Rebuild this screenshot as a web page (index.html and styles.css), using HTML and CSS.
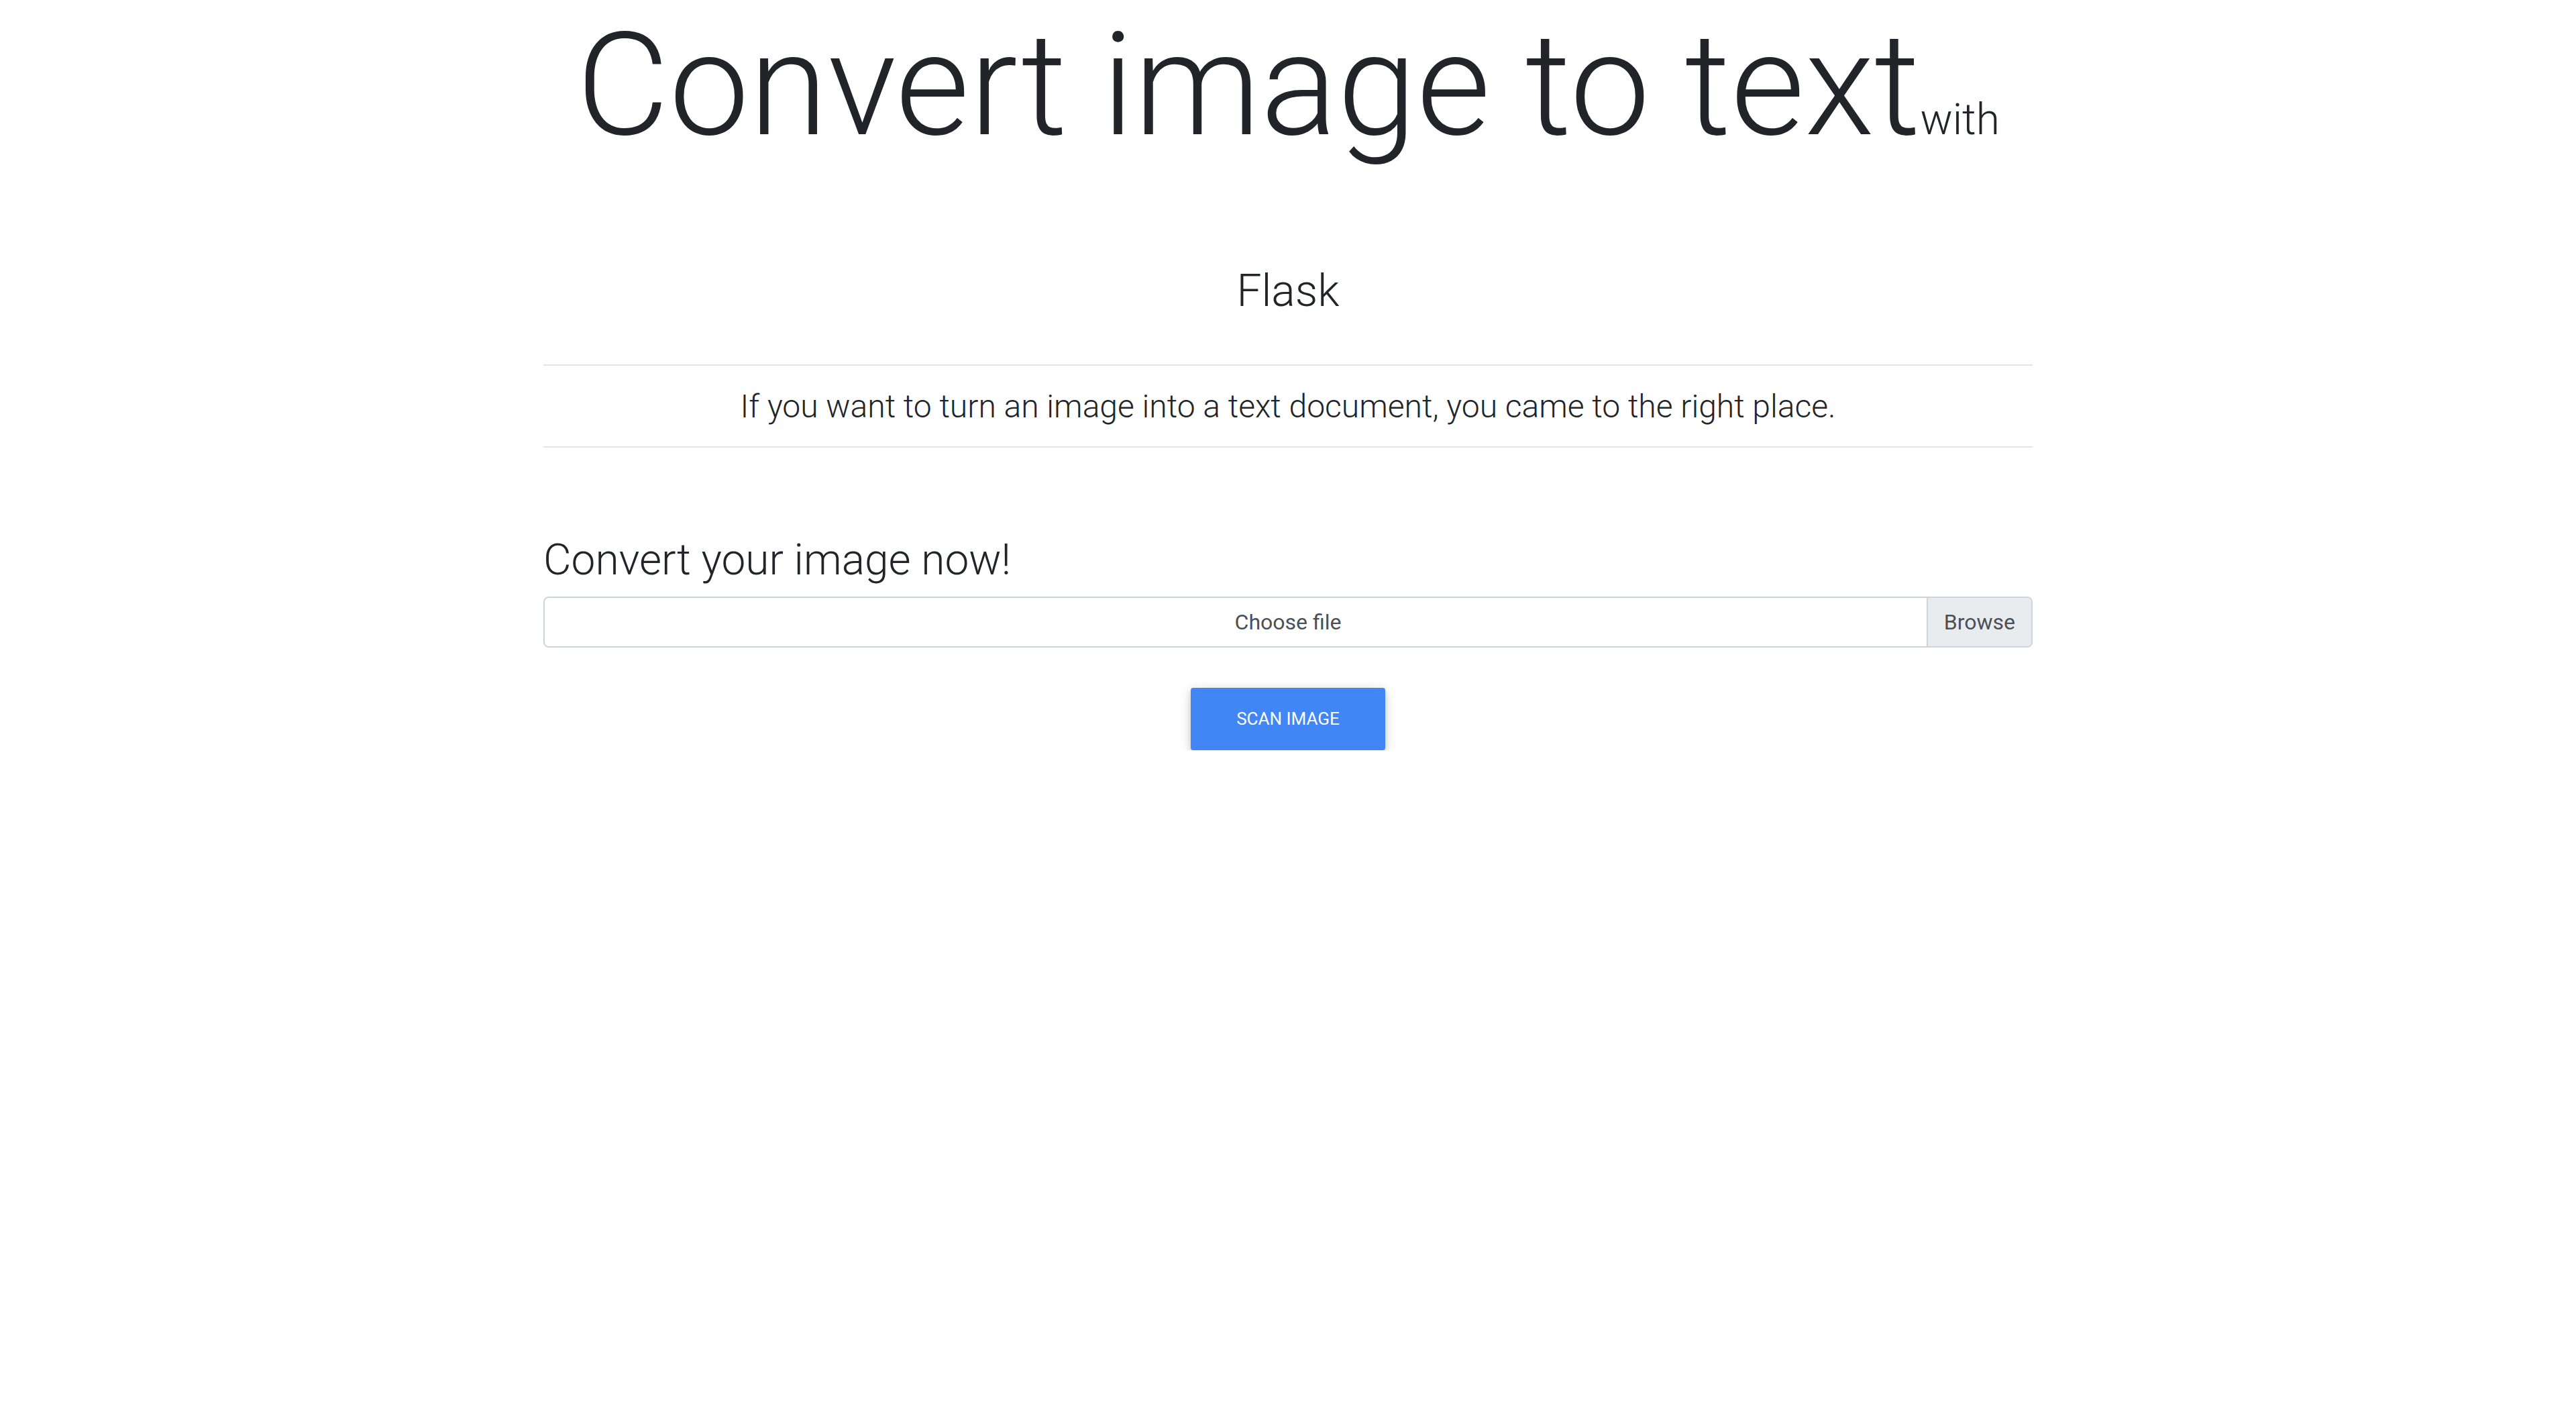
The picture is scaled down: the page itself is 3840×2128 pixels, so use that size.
FILE: index.html
```html
<!DOCTYPE html>
<html lang="en">
<head>
<meta charset="utf-8">
<title>Convert image to text with Flask</title>
<link rel="stylesheet" href="styles.css">
</head>
<body>
<main class="container">
  <h1 class="title">Convert image to text<span class="title-with">with</span></h1>
  <h2 class="subtitle">Flask</h2>
  <hr class="rule">
  <p class="lead">If you want to turn an image into a text document, you came to the right place.</p>
  <hr class="rule">
  <form class="upload">
    <h3 class="upload-heading">Convert your image now!</h3>
    <div class="file-input">
      <span class="file-label">Choose file</span>
      <span class="file-browse">Browse</span>
    </div>
    <div class="actions">
      <button type="button" class="btn-scan">Scan image</button>
    </div>
  </form>
</main>
</body>
</html>
```
FILE: styles.css
```css
html, body {
  margin: 0;
  padding: 0;
  background: #fff;
}
body {
  font-family: Roboto, "Liberation Sans", sans-serif;
  color: #212529;
}
.container {
  max-width: 2280px;
  margin: 0 auto;
  padding: 0 30px;
  box-sizing: border-box;
}
.title {
  margin: 0;
  font-size: 213px;
  line-height: 1.2;
  font-weight: 300;
  text-align: center;
}
.title-with {
  font-size: 64px;
  font-weight: 300;
}
.subtitle {
  margin: 138px 0 0;
  font-size: 66px;
  line-height: 1.2;
  font-weight: 300;
  text-align: center;
}
.rule {
  margin: 0;
  border: 0;
  border-top: 2px solid rgba(0, 0, 0, 0.1);
}
.subtitle + .rule {
  margin-top: 70px;
}
.lead {
  margin: 25px 0 23px;
  font-size: 48px;
  line-height: 72px;
  font-weight: 300;
  text-align: center;
}
.upload {
  margin-top: 130px;
}
.upload-heading {
  margin: 0 0 15px;
  font-size: 64px;
  line-height: 1.2;
  font-weight: 300;
}
.file-input {
  position: relative;
  height: 76px;
  box-sizing: border-box;
  border: 2px solid #ced4da;
  border-radius: 8px;
  display: flex;
  align-items: center;
  justify-content: center;
  font-size: 32px;
  color: #495057;
  background: #fff;
}
.file-browse {
  position: absolute;
  top: 0;
  right: 0;
  bottom: 0;
  display: flex;
  align-items: center;
  padding: 0 24px;
  background: #e9ecef;
  border-left: 2px solid #ced4da;
  border-radius: 0 6px 6px 0;
}
.actions {
  display: flex;
  justify-content: center;
  margin-top: 60px;
}
.btn-scan {
  font-family: Roboto, "Liberation Sans", sans-serif;
  font-size: 26px;
  line-height: 39px;
  font-weight: 400;
  text-transform: uppercase;
  color: #fff;
  background: #4285f4;
  border: 0;
  border-radius: 4px;
  padding: 27px 68px;
  box-shadow: 0 4px 10px 0 rgba(0, 0, 0, 0.16), 0 4px 20px 0 rgba(0, 0, 0, 0.12);
}
```
